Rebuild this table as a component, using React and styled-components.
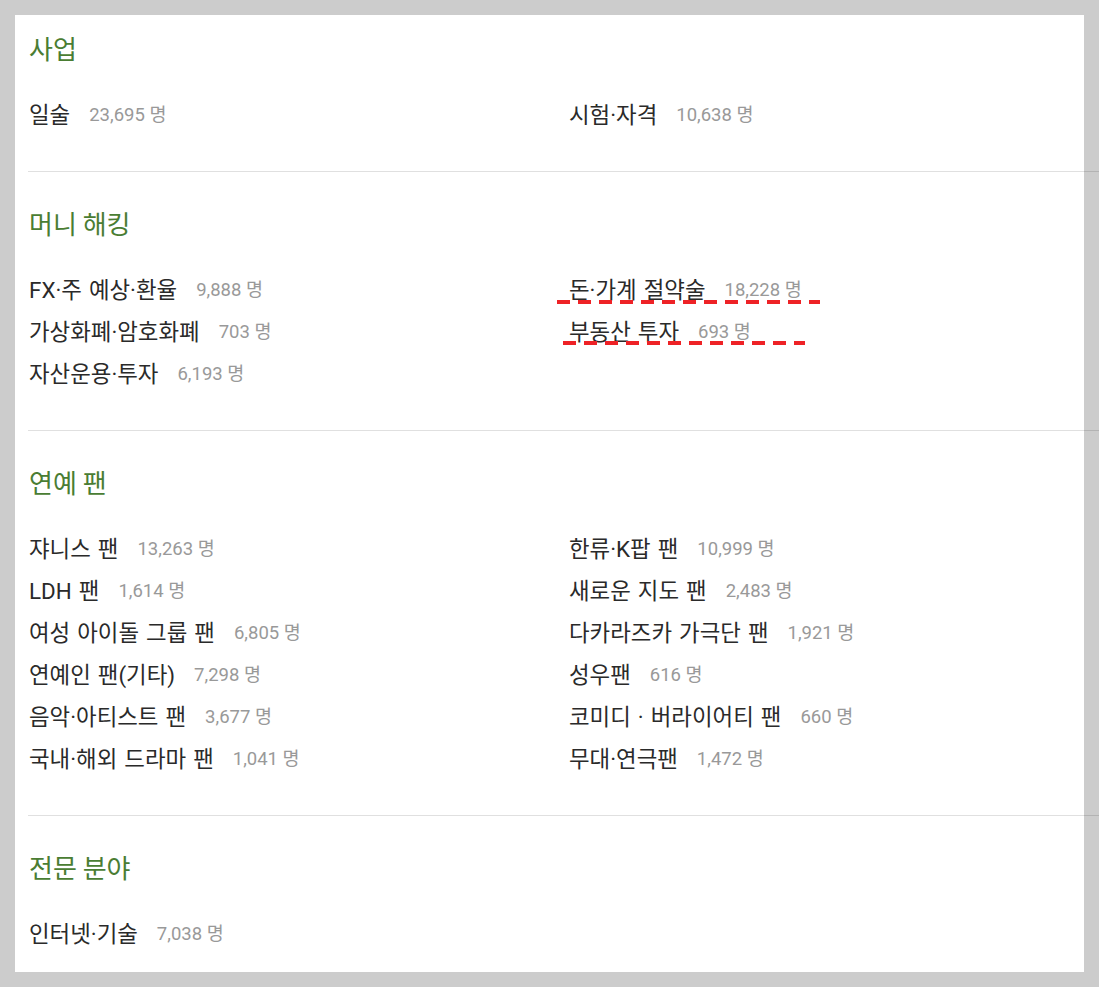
import React from "react";
import styled, { createGlobalStyle } from "styled-components";

const GlobalStyle = createGlobalStyle`
  html, body {
    margin: 0;
    padding: 0;
    background: #cccccc;
    overflow: hidden;
  }
  body {
    font-family: Roboto, "Noto Sans CJK KR", "Noto Sans", sans-serif;
  }
`;

const Panel = styled.div`
  box-sizing: border-box;
  margin: 15px;
  width: 1069px;
  height: 957px;
  background: #ffffff;
  padding-left: 13px;
  overflow: visible;
`;

const Section = styled.section`
  width: 1071px;
  padding: ${(p) => (p.$first ? "17px" : "35px")} 0 37px;
  border-top: ${(p) => (p.$first ? "none" : "1px solid rgba(0,0,0,0.12)")};
`;

const Title = styled.h2`
  margin: 0 0 28px 1px;
  font-family: "Noto Sans CJK KR", sans-serif;
  font-weight: 400;
  font-size: 26px;
  line-height: 32px;
  color: #4a7d33;
`;

const List = styled.ul`
  margin: 0;
  padding: 0;
  list-style: none;
  display: grid;
  grid-template-columns: 540px 540px;
  grid-auto-rows: 42px;
`;

const Item = styled.li`
  position: relative;
  display: flex;
  align-items: center;
  padding-left: 1px;
`;

const Name = styled.span`
  font-family: Roboto, "Noto Sans CJK KR", sans-serif;
  font-size: 22.4px;
  word-spacing: 1.5px;
  color: #2a2a2a;
  white-space: nowrap;
`;

const Count = styled.span`
  margin-left: 19px;
  font-family: Roboto, "Noto Sans CJK KR", sans-serif;
  font-size: 18.5px;
  color: #999999;
  white-space: nowrap;
`;

const Mark = styled.svg`
  position: absolute;
  left: ${(p) => p.$left}px;
  top: ${(p) => p.$top}px;
  height: 4px;
  overflow: visible;
`;

const data = [
  {
    title: "사업",
    items: [
      ["일술", "23,695"],
      ["시험·자격", "10,638"],
    ],
  },
  {
    title: "머니 해킹",
    items: [
      ["FX·주 예상·환율", "9,888"],
      ["돈·가계 절약술", "18,228", { left: -11, top: 33, width: 263 }],
      ["가상화폐·암호화폐", "703"],
      ["부동산 투자", "693", { left: -5, top: 32, width: 242 }],
      ["자산운용·투자", "6,193"],
    ],
  },
  {
    title: "연예 팬",
    items: [
      ["쟈니스 팬", "13,263"],
      ["한류·K팝 팬", "10,999"],
      ["LDH 팬", "1,614"],
      ["새로운 지도 팬", "2,483"],
      ["여성 아이돌 그룹 팬", "6,805"],
      ["다카라즈카 가극단 팬", "1,921"],
      ["연예인 팬(기타)", "7,298"],
      ["성우팬", "616"],
      ["음악·아티스트 팬", "3,677"],
      ["코미디 · 버라이어티 팬", "660"],
      ["국내·해외 드라마 팬", "1,041"],
      ["무대·연극팬", "1,472"],
    ],
  },
  {
    title: "전문 분야",
    items: [["인터넷·기술", "7,038"]],
  },
];

export default function App() {
  return (
    <>
      <GlobalStyle />
      <Panel>
        {data.map((sec, i) => (
          <Section key={sec.title} $first={i === 0}>
            <Title>{sec.title}</Title>
            <List>
              {sec.items.map(([name, count, mark]) => (
                <Item key={name}>
                  <Name>{name}</Name>
                  <Count>{count} 명</Count>
                  {mark && (
                    <Mark
                      $left={mark.left}
                      $top={mark.top}
                      width={mark.width}
                      viewBox={`0 0 ${mark.width} 4`}
                    >
                      <line
                        x1="0"
                        y1="2"
                        x2={mark.width}
                        y2="2"
                        stroke="#ee2226"
                        strokeWidth="4"
                        strokeDasharray="13 8"
                      />
                    </Mark>
                  )}
                </Item>
              ))}
            </List>
          </Section>
        ))}
      </Panel>
    </>
  );
}
